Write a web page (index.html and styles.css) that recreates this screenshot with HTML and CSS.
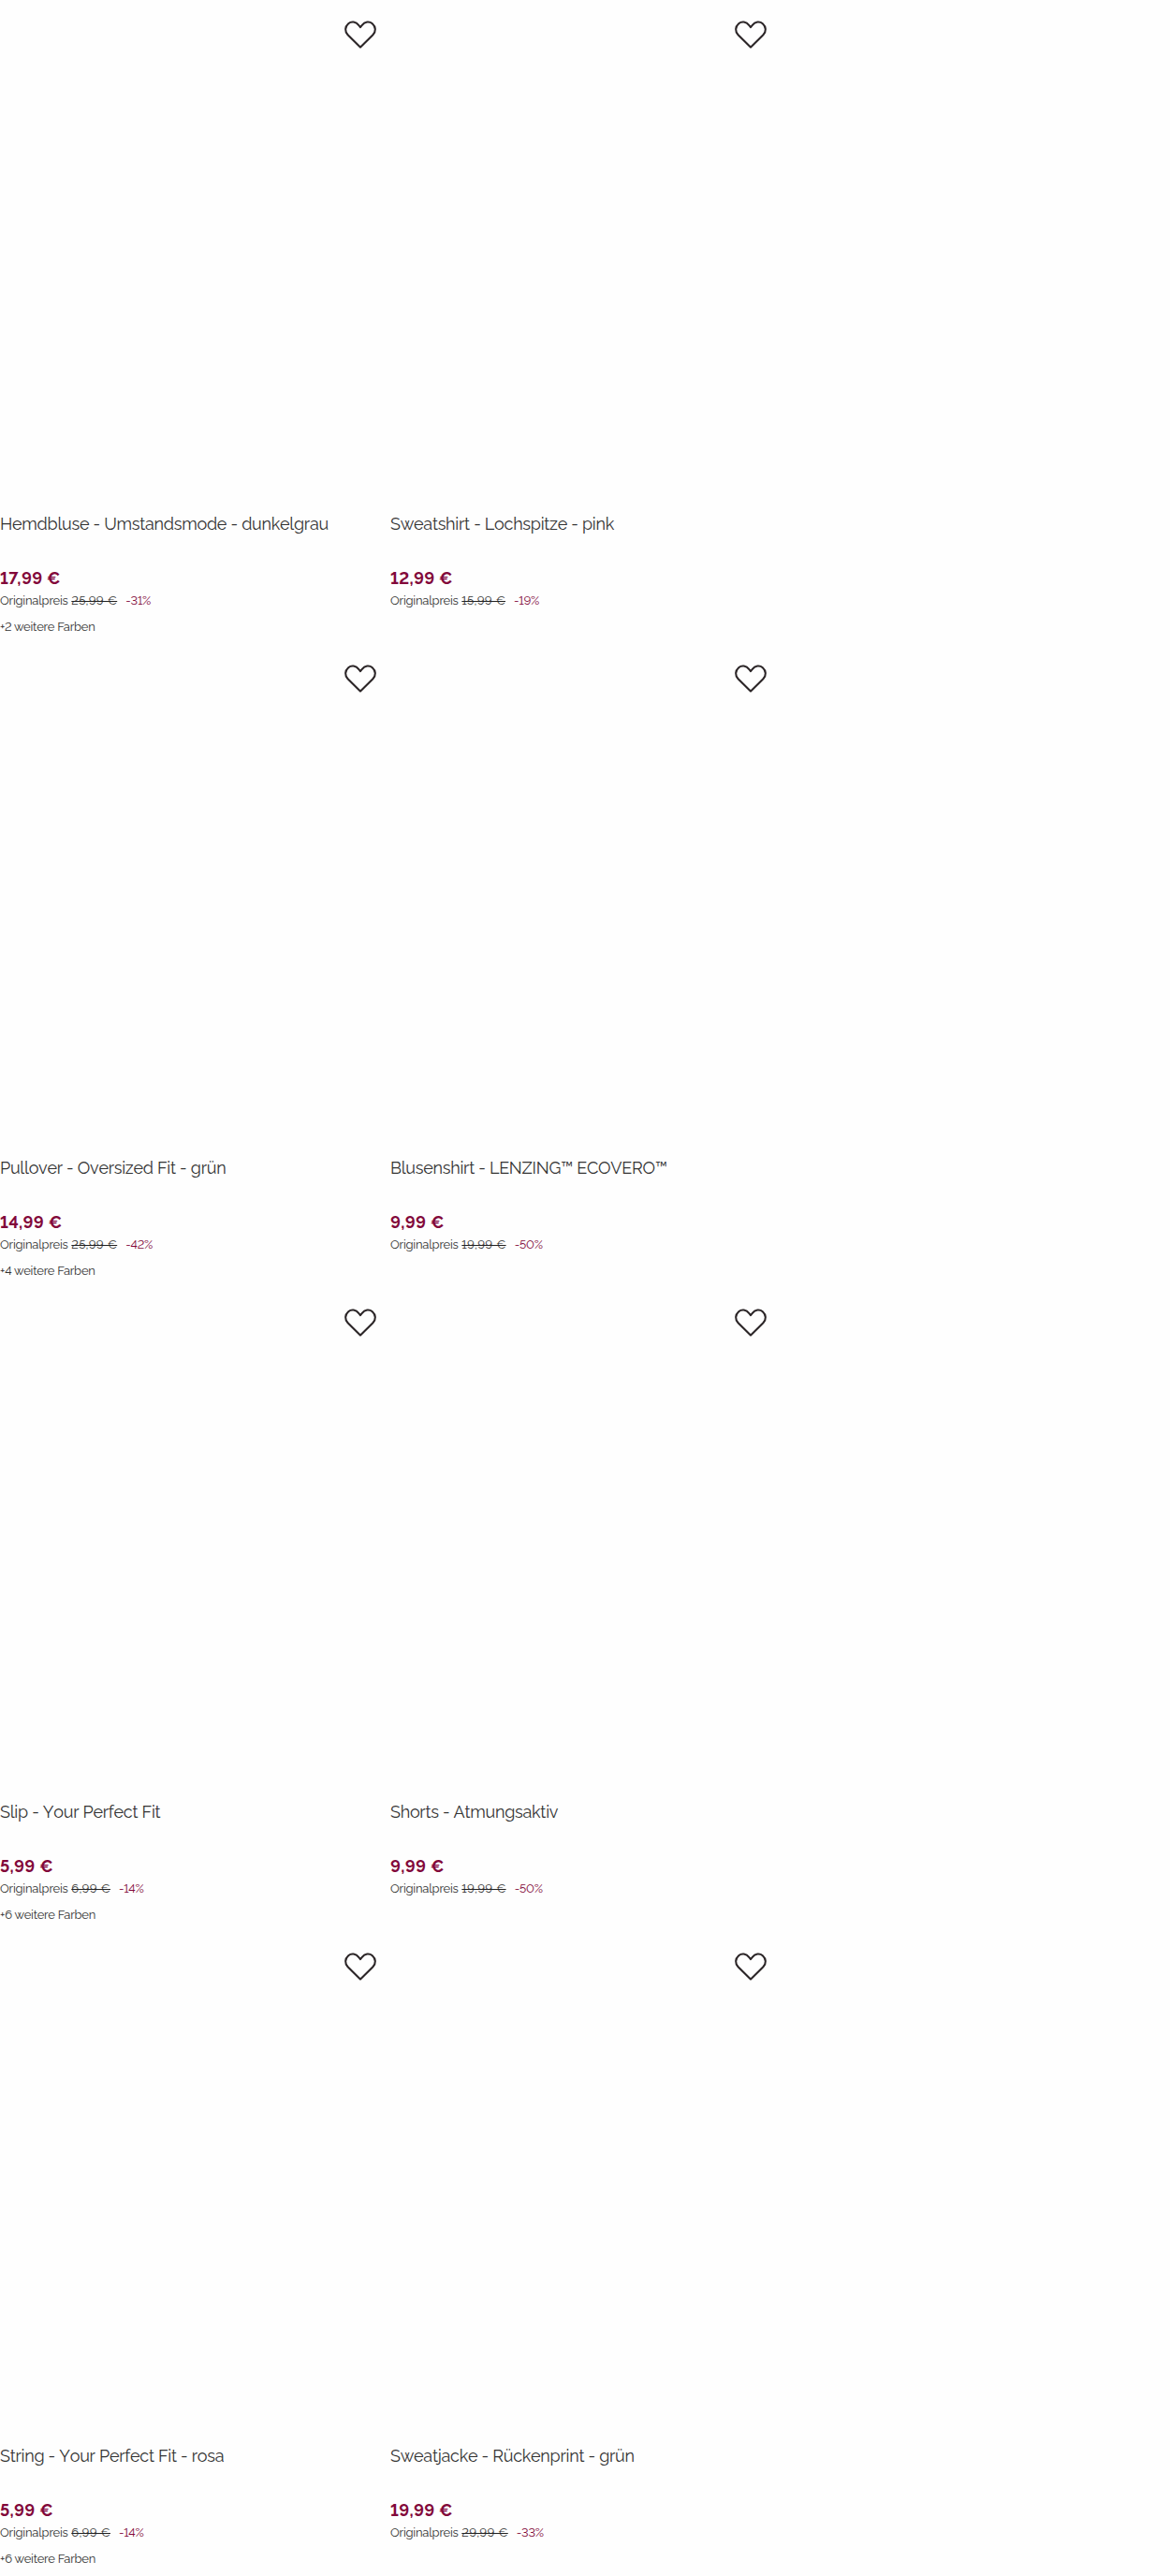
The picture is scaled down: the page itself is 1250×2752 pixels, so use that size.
FILE: index.html
```
<!DOCTYPE html>
<html lang="de">
<head>
    <meta charset="UTF-8">
    <meta name="viewport" content="width=device-width, initial-scale=1.0">
    <title>Produkte</title>
    <link rel="stylesheet" href="styles.css">
</head>
<body>
    <svg class="sprite" aria-hidden="true">
        <symbol id="heart" viewBox="0 0 36 32">
            <path d="M18 8.2L16.4 6.2C13.2 2 8.4 1.4 5.2 4.2C1.3 7.6 1.2 12.7 4.6 16.2L18 29.5L31.4 16.2C34.8 12.7 34.7 7.6 30.8 4.2C27.6 1.4 22.8 2 19.6 6.2Z"/>
        </symbol>
    </svg>

    <div class="product-grid">
        <div class="product">
            <div class="product-media">
                <button class="wishlist" aria-label="Merken"><svg><use href="#heart"/></svg></button>
            </div>
            <div class="product-title">Hemdbluse - Umstandsmode - dunkelgrau</div>
            <div class="price">17,99 €</div>
            <div class="price-old">Originalpreis <s>25,99 €</s><span class="discount">-31%</span></div>
            <div class="colors">+2 weitere Farben</div>
        </div>

        <div class="product">
            <div class="product-media">
                <button class="wishlist" aria-label="Merken"><svg><use href="#heart"/></svg></button>
            </div>
            <div class="product-title">Sweatshirt - Lochspitze - pink</div>
            <div class="price">12,99 €</div>
            <div class="price-old">Originalpreis <s>15,99 €</s><span class="discount">-19%</span></div>
        </div>

        <div class="product">
            <div class="product-media">
                <button class="wishlist" aria-label="Merken"><svg><use href="#heart"/></svg></button>
            </div>
            <div class="product-title">Pullover - Oversized Fit - grün</div>
            <div class="price">14,99 €</div>
            <div class="price-old">Originalpreis <s>25,99 €</s><span class="discount">-42%</span></div>
            <div class="colors">+4 weitere Farben</div>
        </div>

        <div class="product">
            <div class="product-media">
                <button class="wishlist" aria-label="Merken"><svg><use href="#heart"/></svg></button>
            </div>
            <div class="product-title">Blusenshirt - LENZING™ ECOVERO™</div>
            <div class="price">9,99 €</div>
            <div class="price-old">Originalpreis <s>19,99 €</s><span class="discount">-50%</span></div>
        </div>

        <div class="product">
            <div class="product-media">
                <button class="wishlist" aria-label="Merken"><svg><use href="#heart"/></svg></button>
            </div>
            <div class="product-title">Slip - Your Perfect Fit</div>
            <div class="price">5,99 €</div>
            <div class="price-old">Originalpreis <s>6,99 €</s><span class="discount">-14%</span></div>
            <div class="colors">+6 weitere Farben</div>
        </div>

        <div class="product">
            <div class="product-media">
                <button class="wishlist" aria-label="Merken"><svg><use href="#heart"/></svg></button>
            </div>
            <div class="product-title">Shorts - Atmungsaktiv</div>
            <div class="price">9,99 €</div>
            <div class="price-old">Originalpreis <s>19,99 €</s><span class="discount">-50%</span></div>
        </div>

        <div class="product">
            <div class="product-media">
                <button class="wishlist" aria-label="Merken"><svg><use href="#heart"/></svg></button>
            </div>
            <div class="product-title">String - Your Perfect Fit - rosa</div>
            <div class="price">5,99 €</div>
            <div class="price-old">Originalpreis <s>6,99 €</s><span class="discount">-14%</span></div>
            <div class="colors">+6 weitere Farben</div>
        </div>

        <div class="product">
            <div class="product-media">
                <button class="wishlist" aria-label="Merken"><svg><use href="#heart"/></svg></button>
            </div>
            <div class="product-title">Sweatjacke - Rückenprint - grün</div>
            <div class="price">19,99 €</div>
            <div class="price-old">Originalpreis <s>29,99 €</s><span class="discount">-33%</span></div>
        </div>
    </div>
</body>
</html>
```
FILE: styles.css
```
* {
    margin: 0;
    padding: 0;
    box-sizing: border-box;
}

body {
    background: #fefefe;
    color: #333;
    font-family: Raleway, Lato, sans-serif;
    font-variant-numeric: lining-nums;
}

.sprite {
    display: none;
}

/* two product columns, the last third stays free */
.product-grid {
    display: grid;
    grid-template-columns: repeat(2, 417px);
    grid-auto-rows: 688px;
}

.product-media {
    display: flex;
    justify-content: flex-end;
    align-items: flex-start;
    height: 548px;
    padding: 21px 14px 0 0;
}

.wishlist {
    width: 36px;
    height: 32px;
    background: none;
    border: none;
    cursor: pointer;
}

.wishlist svg {
    display: block;
    width: 36px;
    height: 32px;
    fill: none;
    stroke: #2b2527;
    stroke-width: 2.1;
    stroke-linejoin: round;
}

.product-title {
    height: 58px;
    font-size: 18px;
    font-kerning: none;
    line-height: 24px;
    letter-spacing: -0.26px;
}

.price {
    color: #82083a;
    font-size: 18px;
    font-weight: 700;
    line-height: 24px;
    letter-spacing: 0.33px;
}

.price-old {
    margin-top: 2px;
    font-size: 13px;
    line-height: 19px;
    letter-spacing: -0.2px;
}

.price-old s {
    margin-left: 0.5px;
    letter-spacing: 0.25px;
    text-decoration-color: #222;
    text-decoration-thickness: 1.4px;
}

.discount {
    margin-left: 9px;
    color: #82083a;
}

.colors {
    margin-top: 9px;
    font-size: 13px;
    line-height: 19px;
    letter-spacing: -0.22px;
}
```
